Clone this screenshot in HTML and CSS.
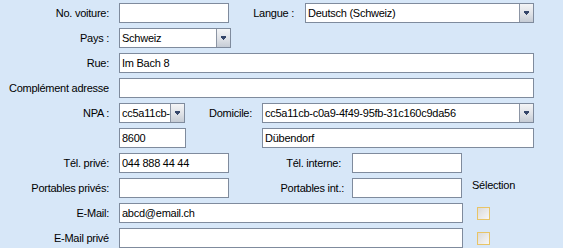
FILE: index.html
```html
<!DOCTYPE html>
<html lang="fr">
<head>
  <meta charset="UTF-8">
  <title>Adresse</title>
  <link rel="stylesheet" href="styles.css">
</head>
<body>
  <form class="address-form" autocomplete="off">
    <!-- row 1 -->
    <div class="row">
      <label class="lbl">No. voiture:</label>
      <input class="w110" type="text" value="">
      <label class="mid mid-langue">Langue :</label>
      <div class="combo w229"><span class="combo-text">Deutsch (Schweiz)</span><span class="drop"><svg viewBox="0 0 5 4" width="5" height="4"><path d="M0 0h5v2H0z M1 2h3v1H1z M2 3h1v1H2z" fill="#35466a"/></svg></span></div>
    </div>
    <div class="row">
      <label class="lbl">Pays :</label>
      <div class="combo w112"><span class="combo-text">Schweiz</span><span class="drop"><svg viewBox="0 0 5 4" width="5" height="4"><path d="M0 0h5v2H0z M1 2h3v1H1z M2 3h1v1H2z" fill="#35466a"/></svg></span></div>
    </div>
    <div class="row">
      <label class="lbl">Rue:</label>
      <input class="w415" type="text" value="Im Bach 8">
    </div>
    <div class="row">
      <label class="lbl">Complément adresse</label>
      <input class="w415" type="text" value="">
    </div>
    <div class="row">
      <label class="lbl">NPA :</label>
      <div class="combo w66"><span class="combo-text">cc5a11cb-c0a9-4f49-95fb-31c160c9da56</span><span class="drop"><svg viewBox="0 0 5 4" width="5" height="4"><path d="M0 0h5v2H0z M1 2h3v1H1z M2 3h1v1H2z" fill="#35466a"/></svg></span></div>
      <label class="mid mid-domicile">Domicile:</label>
      <div class="combo w272"><span class="combo-text">cc5a11cb-c0a9-4f49-95fb-31c160c9da56</span><span class="drop"><svg viewBox="0 0 5 4" width="5" height="4"><path d="M0 0h5v2H0z M1 2h3v1H1z M2 3h1v1H2z" fill="#35466a"/></svg></span></div>
    </div>
    <div class="row">
      <span class="lbl"></span>
      <input class="w67" type="text" value="8600">
      <span class="mid mid-ville"></span>
      <input class="w272" type="text" value="Dübendorf">
    </div>
    <div class="row">
      <label class="lbl">Tél. privé:</label>
      <input class="w110" type="text" value="044 888 44 44">
      <label class="mid mid-tel">Tél. interne:</label>
      <input class="w110" type="text" value="">
    </div>
    <div class="row">
      <label class="lbl">Portables privés:</label>
      <input class="w110" type="text" value="">
      <label class="mid mid-port">Portables int.:</label>
      <input class="w110" type="text" value="">
      <span class="selection">Sélection</span>
    </div>
    <div class="row">
      <label class="lbl">E-Mail:</label>
      <input class="w344" type="text" value="abcd@email.ch">
      <span class="check"></span>
    </div>
    <div class="row">
      <label class="lbl">E-Mail privé</label>
      <input class="w344" type="text" value="">
      <span class="check"></span>
    </div>
  </form>
</body>
</html>
```

FILE: styles.css
```css
body {
  margin: 0;
  background-color: #d7e7f8;
  font-family: "Liberation Sans", Arial, sans-serif;
  font-size: 11px;
  letter-spacing: -0.25px;
  color: #000;
}
.address-form {
  padding-top: 3px;
  display: flex;
  flex-direction: column;
  gap: 5px;
}
.row {
  display: flex;
  align-items: center;
  height: 20px;
}
.lbl {
  width: 119px;
  padding-right: 10px;
  box-sizing: border-box;
  text-align: right;
  white-space: nowrap;
}
.mid {
  box-sizing: border-box;
  text-align: right;
  white-space: nowrap;
}
.mid-langue { width: 76px; padding-right: 11px; }
.mid-domicile { width: 77px; padding-right: 10px; }
.mid-ville { width: 76px; }
.mid-tel { width: 123px; padding-right: 11px; }
.mid-port { width: 123px; padding-right: 8px; }

input {
  height: 20px;
  box-sizing: border-box;
  border: 1px solid #7f8b9d;
  background: #fff;
  padding: 0 2px;
  margin: 0;
  font-family: inherit;
  font-size: 11px;
  letter-spacing: -0.25px;
  color: #000;
  outline: none;
}
.combo {
  height: 20px;
  box-sizing: border-box;
  border: 1px solid #7f8b9d;
  background: #fff;
  display: flex;
  align-items: center;
}
.combo-text {
  flex: 1;
  padding-left: 2px;
  overflow: hidden;
  white-space: nowrap;
}
.drop {
  width: 13px;
  align-self: stretch;
  border-left: 1px solid #8c95a4;
  background: linear-gradient(#f4f5f7, #dfe2e7 55%, #c6ccd5);
  display: flex;
  align-items: center;
  justify-content: center;
}
.drop svg {
  display: block;
  shape-rendering: crispEdges;
}
.w66 { width: 66px; }
.w67 { width: 67px; }
.w110 { width: 110px; }
.w112 { width: 112px; }
.w229 { width: 229px; }
.w272 { width: 272px; }
.w344 { width: 344px; }
.w415 { width: 415px; }

.selection {
  align-self: flex-start;
  line-height: 14px;
  margin-left: 10px;
}
.check {
  width: 13px;
  height: 13px;
  box-sizing: border-box;
  margin-left: 14px;
  border: 1px solid #e8c466;
  background: linear-gradient(135deg, #dadada, #f7f7f7);
}
```
